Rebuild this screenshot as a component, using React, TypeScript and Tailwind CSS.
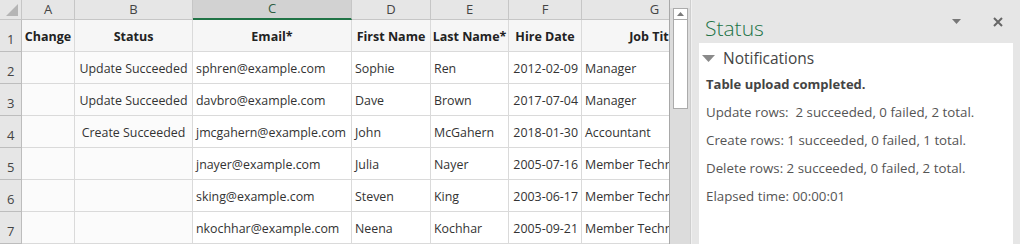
import React from 'react';

const cols = [
  { key: 'A', w: 'w-[53px]' },
  { key: 'B', w: 'w-[118px]' },
  { key: 'C', w: 'w-[159px]' },
  { key: 'D', w: 'w-[79px]' },
  { key: 'E', w: 'w-[78px]' },
  { key: 'F', w: 'w-[73px]' },
  { key: 'G', w: 'w-[146px]' },
];

const headers = ['Change', 'Status', 'Email*', 'First Name', 'Last Name*', 'Hire Date', 'Job Title'];

const rows = [
  ['', 'Update Succeeded', 'sphren@example.com', 'Sophie', 'Ren', '2012-02-09', 'Manager'],
  ['', 'Update Succeeded', 'davbro@example.com', 'Dave', 'Brown', '2017-07-04', 'Manager'],
  ['', 'Create Succeeded', 'jmcgahern@example.com', 'John', 'McGahern', '2018-01-30', 'Accountant'],
  ['', '', 'jnayer@example.com', 'Julia', 'Nayer', '2005-07-16', 'Member Technical Staff'],
  ['', '', 'sking@example.com', 'Steven', 'King', '2003-06-17', 'Member Technical Staff'],
  ['', '', 'nkochhar@example.com', 'Neena', 'Kochhar', '2005-09-21', 'Member Technical Staff'],
];

function cellAlign(ci: number) {
  if (ci === 0) return 'bg-[#fbfbfb]';
  if (ci === 1) return 'justify-center bg-[#fbfbfb]';
  if (ci === 5) return 'justify-end pr-[3px]';
  return 'pl-[3px]';
}

function Sheet() {
  return (
    <div className="w-[669px] h-full overflow-hidden bg-white">
      <div className="w-[728px]">
        {/* column letters */}
        <div className="flex h-[20px] bg-[#e6e6e6] text-[13px] text-[#444]">
          <div className="w-[22px] shrink-0 border-r border-b border-[#c6c6c6] relative">
            <svg className="absolute right-[3px] bottom-[3px]" width="12" height="12" viewBox="0 0 12 12">
              <polygon points="12,0 12,12 0,12" fill="#b5b5b5" />
            </svg>
          </div>
          {cols.map((c) =>
            c.key === 'C' ? (
              <div
                key={c.key}
                className={`${c.w} shrink-0 flex items-center justify-center bg-[#d2d2d2] border-r border-[#c6c6c6] border-b-2 border-b-[#217346] text-[#2d5c41]`}
              >
                {c.key}
              </div>
            ) : (
              <div
                key={c.key}
                className={`${c.w} shrink-0 flex items-center justify-center border-r border-b border-[#c6c6c6]`}
              >
                {c.key}
              </div>
            )
          )}
        </div>
        {/* header row */}
        <div className="flex h-[32px]">
          <div className="w-[22px] shrink-0 bg-[#e6e6e6] border-r border-b border-[#bdbdbd] text-[13px] text-[#444] flex items-end pl-[7px] pb-[2px]">
            1
          </div>
          {cols.map((c, i) => (
            <div
              key={c.key}
              className={`${c.w} shrink-0 bg-[#f6f6f6] border-r border-b border-[#dadada] flex items-center justify-center pt-[3px] text-[12.5px] font-bold text-[#222] whitespace-nowrap overflow-hidden`}
            >
              {headers[i]}
            </div>
          ))}
        </div>
        {rows.map((r, ri) => (
          <div key={ri} className="flex h-[32px]">
            <div className="w-[22px] shrink-0 bg-[#e6e6e6] border-r border-b border-[#bdbdbd] text-[13px] text-[#444] flex items-end pl-[7px] pb-[2px]">
              {ri + 2}
            </div>
            {cols.map((c, ci) => (
              <div
                key={c.key}
                className={`${c.w} shrink-0 border-r border-b border-[#dadada] flex items-center pt-[3px] text-[12.4px] text-[#333] whitespace-nowrap overflow-hidden ${cellAlign(ci)}`}
              >
                {r[ci]}
              </div>
            ))}
          </div>
        ))}
      </div>
    </div>
  );
}

function ScrollBar() {
  return (
    <div className="w-[22px] h-full shrink-0 border-l border-[#a8a8a8] bg-[#dcdcdc] flex flex-col items-center border-r border-r-[#cfcfcf]">
      <div className="w-full h-[8px] bg-[#e6e6e6]" />
      <div className="w-[15px] h-[12px] bg-white border border-[#ababab] flex items-center justify-center">
        <svg width="7" height="4" viewBox="0 0 7 4">
          <polygon points="3.5,0 7,4 0,4" fill="#7a7a7a" />
        </svg>
      </div>
      <div className="w-[15px] h-[89px] bg-white border border-[#ababab] border-t-0" />
    </div>
  );
}

function StatusPane() {
  return (
    <div className="flex-1 h-full bg-[#e6e6e6] pl-[7px] pr-[7px] flex flex-col">
      <div className="h-[43px] flex items-center pr-[10px]">
        <div className="flex-1 pl-[6px] pt-[14px] text-[21px] text-[#217346] font-light">Status</div>
        <svg width="9" height="5" viewBox="0 0 9 5" className="mr-[32px]">
          <polygon points="0,0 9,0 4.5,5" fill="#777" />
        </svg>
        <svg width="10" height="10" viewBox="0 0 10 10">
          <path d="M1 1 L9 9 M9 1 L1 9" stroke="#666" strokeWidth="2" />
        </svg>
      </div>
      <div className="flex-1 bg-white pl-[7px] text-[13.3px] text-[#555]">
        <div className="flex items-center h-[30px] -ml-[4px] pt-[1px]">
          <svg width="13" height="7" viewBox="0 0 13 7" className="mr-[8px]">
            <polygon points="0,0 13,0 6.5,7" fill="#8a8a8a" />
          </svg>
          <span className="text-[15.5px] text-[#444]">Notifications</span>
        </div>
        <div className="h-[24px] flex items-center font-bold text-[13px] text-[#444]">Table upload completed.</div>
        <div className="h-[2px]" />
        <div className="h-[28px] flex items-center whitespace-pre">Update rows:  2 succeeded, 0 failed, 2 total.</div>
        <div className="h-[28px] flex items-center">Create rows: 1 succeeded, 0 failed, 1 total.</div>
        <div className="h-[28px] flex items-center">Delete rows: 2 succeeded, 0 failed, 2 total.</div>
        <div className="h-[28px] flex items-center">Elapsed time: 00:00:01</div>
      </div>
    </div>
  );
}

export default function App() {
  return (
    <div className="w-[1020px] h-[244px] flex overflow-hidden bg-[#e6e6e6] font-['Open_Sans','Noto_Sans',sans-serif]">
      <Sheet />
      <ScrollBar />
      <div className="w-[1px] h-full bg-[#f0f0f0]" />
      <StatusPane />
    </div>
  );
}
